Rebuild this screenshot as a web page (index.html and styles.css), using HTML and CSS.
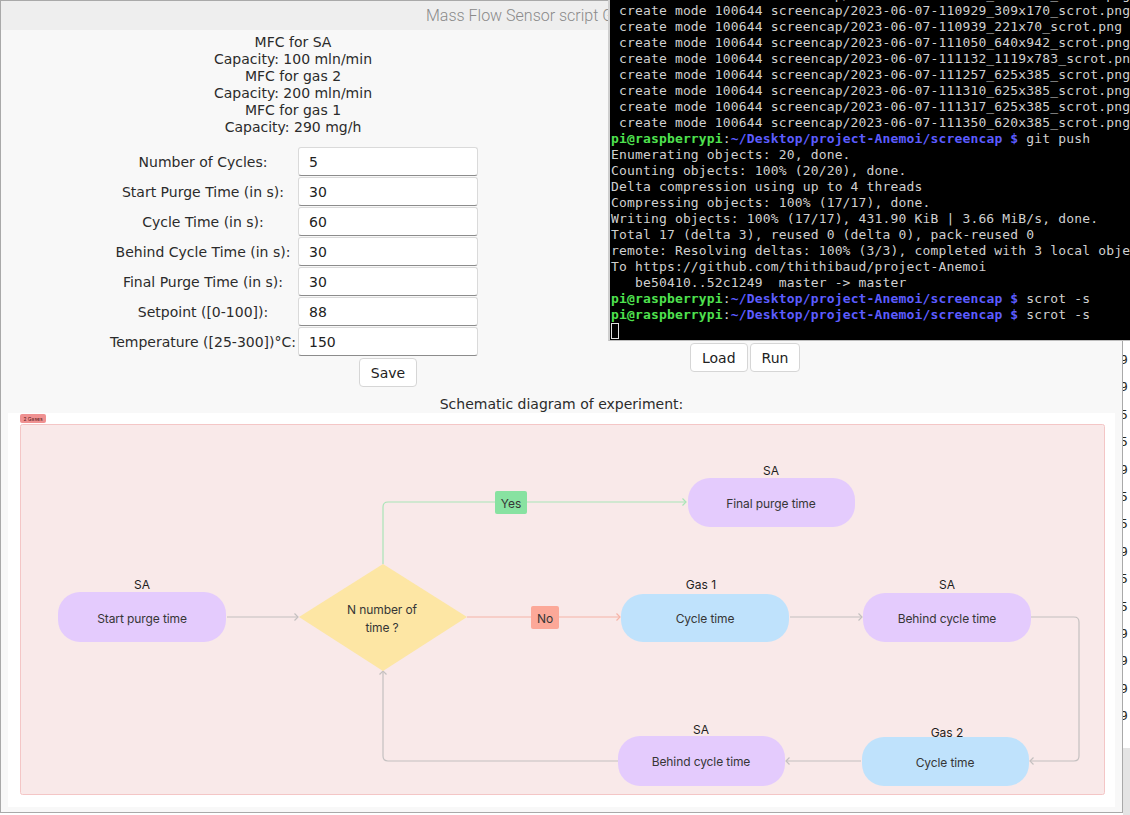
FILE: index.html
```html
<!DOCTYPE html>
<html>
<head>
<meta charset="utf-8">
<link rel="stylesheet" href="styles.css">
</head>
<body>
<div class="behind">
  <div>9</div><div>9</div><div>5</div><div>5</div><div>9</div><div>5</div><div>5</div><div>9</div><div>5</div><div>5</div><div>9</div><div>9</div><div>9</div><div>9</div>
</div>
<div class="behind-gray"></div>

<div class="app">
  <div class="titlebar"><span class="title">Mass Flow Sensor script GUI</span></div>
  <div class="top">
    <div class="left">
      <div class="mfc">MFC for SA<br>Capacity: 100 mln/min<br>MFC for gas 2<br>Capacity: 200 mln/min<br>MFC for gas 1<br>Capacity: 290 mg/h</div>
      <div class="form">
        <div class="label">Number of Cycles:</div><input class="entry" type="text" value="5">
        <div class="label">Start Purge Time (in s):</div><input class="entry" type="text" value="30">
        <div class="label">Cycle Time (in s):</div><input class="entry" type="text" value="60">
        <div class="label">Behind Cycle Time (in s):</div><input class="entry" type="text" value="30">
        <div class="label">Final Purge Time (in s):</div><input class="entry" type="text" value="30">
        <div class="label">Setpoint ([0-100]):</div><input class="entry" type="text" value="88">
        <div class="label">Temperature ([25-300])°C:</div><input class="entry" type="text" value="150">
        <button class="btn save">Save</button>
      </div>
    </div>
    <div class="right">
      <div class="plot"></div>
      <div class="btns"><button class="btn">Load</button><button class="btn">Run</button></div>
    </div>
  </div>
  <div class="schem-label">Schematic diagram of experiment:</div>
  <div class="shot">
    <svg class="diagram" width="1107" height="394" viewBox="0 0 1107 394" xmlns="http://www.w3.org/2000/svg">
      <g transform="translate(-8,-414)">
        <rect x="20" y="415" width="26" height="9" rx="2" fill="#ef9191"/>
        <text x="33" y="419.8" class="badge">2 Gases</text>
        <rect x="20.5" y="425.5" width="1084" height="370" rx="2" fill="#f9e9e9" stroke="#f4c6c6"/>

        <g fill="none" stroke-width="1.2">
          <path d="M227 618 H298" stroke="#c4c0c0"/>
          <polyline points="294.5,614.5 298,618 294.5,621.5" stroke="#c4c0c0"/>
          <path d="M383 565 V508 Q383 503 388 503 H686" stroke="#a9e5b7"/>
          <polyline points="682.5,499.5 686,503 682.5,506.5" stroke="#a9e5b7"/>
          <path d="M467 618 H620" stroke="#f6b4a8"/>
          <polyline points="616.5,614.5 620,618 616.5,621.5" stroke="#f6b4a8"/>
          <path d="M790 618 H862" stroke="#c4c0c0"/>
          <polyline points="858.5,614.5 862,618 858.5,621.5" stroke="#c4c0c0"/>
          <path d="M1031 618 H1074 Q1079 618 1079 623 V757 Q1079 762 1074 762 H1030" stroke="#c4c0c0"/>
          <polyline points="1033.5,758.5 1030,762 1033.5,765.5" stroke="#c4c0c0"/>
          <path d="M861 762 H786" stroke="#c4c0c0"/>
          <polyline points="789.5,758.5 786,762 789.5,765.5" stroke="#c4c0c0"/>
          <path d="M618 762 H388 Q383 762 383 757 V672" stroke="#c4c0c0"/>
          <polyline points="379.5,675.5 383,672 386.5,675.5" stroke="#c4c0c0"/>
        </g>

        <polygon points="383,565 467,618 383,672 299,618" fill="#fde6a4"/>
        <text x="382" y="610" class="node">N number of</text>
        <text x="382" y="628" class="node">time ?</text>

        <rect x="495" y="492" width="32" height="23" rx="2" fill="#88e2a1"/>
        <text x="511" y="504" class="node">Yes</text>
        <rect x="531" y="607" width="28" height="23" rx="2" fill="#fca898"/>
        <text x="545" y="619" class="node">No</text>

        <text x="142" y="585" class="lbl">SA</text>
        <rect x="58" y="593" width="168" height="50" rx="22" fill="#e4cbfd"/>
        <text x="142" y="619" class="node">Start purge time</text>

        <text x="771" y="471" class="lbl">SA</text>
        <rect x="688" y="479" width="167" height="49" rx="22" fill="#e4cbfd"/>
        <text x="771" y="504" class="node">Final purge time</text>

        <text x="701" y="585" class="lbl">Gas 1</text>
        <rect x="621" y="595" width="168" height="48" rx="22" fill="#bfe2fc"/>
        <text x="705" y="619" class="node">Cycle time</text>

        <text x="947" y="585" class="lbl">SA</text>
        <rect x="863" y="594" width="168" height="49" rx="22" fill="#e4cbfd"/>
        <text x="947" y="619" class="node">Behind cycle time</text>

        <text x="947" y="733" class="lbl">Gas 2</text>
        <rect x="862" y="738" width="167" height="49" rx="22" fill="#bfe2fc"/>
        <text x="945" y="763" class="node">Cycle time</text>

        <text x="701" y="730" class="lbl">SA</text>
        <rect x="618" y="737" width="167" height="50" rx="22" fill="#e4cbfd"/>
        <text x="701" y="762" class="node">Behind cycle time</text>
      </g>
    </svg>
  </div>
</div>

<div class="terminal">
  <div class="term-lines">
    <div class="tl"> create mode 100644 screencap/2023-06-07-110858_625x385_scrot.png</div>
    <div class="tl"> create mode 100644 screencap/2023-06-07-110929_309x170_scrot.png</div>
    <div class="tl"> create mode 100644 screencap/2023-06-07-110939_221x70_scrot.png</div>
    <div class="tl"> create mode 100644 screencap/2023-06-07-111050_640x942_scrot.png</div>
    <div class="tl"> create mode 100644 screencap/2023-06-07-111132_1119x783_scrot.png</div>
    <div class="tl"> create mode 100644 screencap/2023-06-07-111257_625x385_scrot.png</div>
    <div class="tl"> create mode 100644 screencap/2023-06-07-111310_625x385_scrot.png</div>
    <div class="tl"> create mode 100644 screencap/2023-06-07-111317_625x385_scrot.png</div>
    <div class="tl"> create mode 100644 screencap/2023-06-07-111350_620x385_scrot.png</div>
    <div class="tl"><span class="pu">pi@raspberrypi</span>:<span class="pp">~/Desktop/project-Anemoi/screencap $</span> git push</div>
    <div class="tl">Enumerating objects: 20, done.</div>
    <div class="tl">Counting objects: 100% (20/20), done.</div>
    <div class="tl">Delta compression using up to 4 threads</div>
    <div class="tl">Compressing objects: 100% (17/17), done.</div>
    <div class="tl">Writing objects: 100% (17/17), 431.90 KiB | 3.66 MiB/s, done.</div>
    <div class="tl">Total 17 (delta 3), reused 0 (delta 0), pack-reused 0</div>
    <div class="tl">remote: Resolving deltas: 100% (3/3), completed with 3 local objects.</div>
    <div class="tl">To https://github.com/thithibaud/project-Anemoi</div>
    <div class="tl">   be50410..52c1249  master -&gt; master</div>
    <div class="tl"><span class="pu">pi@raspberrypi</span>:<span class="pp">~/Desktop/project-Anemoi/screencap $</span> scrot -s</div>
    <div class="tl"><span class="pu">pi@raspberrypi</span>:<span class="pp">~/Desktop/project-Anemoi/screencap $</span> scrot -s</div>
    <div class="tl"><span class="cursor"></span></div>
  </div>
</div>
</body>
</html>
```

FILE: styles.css
```css
body {
  margin: 0;
  width: 1130px;
  height: 815px;
  overflow: hidden;
  background: #ffffff;
  position: relative;
  font-family: "DejaVu Sans", sans-serif;
}

/* desktop content behind the windows */
.behind {
  position: absolute;
  left: 1120px;
  top: 346px;
  font-family: "DejaVu Sans Mono", monospace;
  font-size: 13px;
  line-height: 27.4px;
  color: #2a2a1a;
}
.behind-gray {
  position: absolute;
  left: 1123px;
  top: 748px;
  width: 7px;
  height: 67px;
  background: #e4e4e4;
}

/* application window */
.app {
  position: absolute;
  left: 0;
  top: 0;
  width: 1123px;
  height: 813px;
  box-sizing: border-box;
  border: 1px solid #a9a9a9;
  background: #f8f8f8;
  display: flex;
  flex-direction: column;
  z-index: 1;
}
.titlebar {
  height: 29px;
  flex-shrink: 0;
  background: #eeeeee;
  display: flex;
  align-items: center;
  padding-left: 425px;
  font-family: Roboto, "Noto Sans", sans-serif;
  font-weight: 300;
  font-size: 16px;
  color: #8a8a8a;
  white-space: nowrap;
}

.top {
  display: flex;
  padding-top: 4px;
}
.left {
  width: 584px;
  display: flex;
  flex-direction: column;
  align-items: center;
}
.mfc {
  font-size: 14px;
  line-height: 17px;
  text-align: center;
  color: #2b2b2b;
}
.form {
  margin-top: 11px;
  display: grid;
  grid-template-columns: 190px 180px;
  grid-auto-rows: 29px;
  row-gap: 1px;
}
.label {
  display: flex;
  align-items: center;
  justify-content: center;
  font-size: 14px;
  color: #2b2b2b;
  white-space: nowrap;
}
.entry {
  box-sizing: border-box;
  width: 180px;
  height: 29px;
  margin: 0;
  border: 1px solid #dadada;
  border-bottom-color: #8c8c8c;
  border-radius: 3px;
  background: #ffffff;
  padding: 0 10px;
  font-family: "DejaVu Sans", sans-serif;
  font-size: 14px;
  color: #222222;
  outline: none;
}
.btn {
  box-sizing: border-box;
  height: 29px;
  margin: 0;
  padding: 0 11px;
  background: #ffffff;
  border: 1px solid #d6d6d6;
  border-radius: 4px;
  font-family: "DejaVu Sans", sans-serif;
  font-size: 14px;
  color: #222222;
}
.save {
  grid-column: 2;
  justify-self: center;
  margin-top: 1px;
}
.right {
  padding-left: 105px;
}
.plot {
  height: 309px;
}
.btns {
  display: flex;
  gap: 2px;
}

.schem-label {
  margin-top: 10px;
  font-size: 14px;
  line-height: 17px;
  text-align: center;
  color: #2b2b2b;
}
.shot {
  margin: 0 7px;
  height: 394px;
  background: #ffffff;
}
.diagram {
  display: block;
}
.diagram text {
  font-family: Inter, "Noto Sans", sans-serif;
  text-anchor: middle;
  dominant-baseline: central;
}
.diagram .node {
  font-size: 12px;
  fill: #363636;
  letter-spacing: -0.1px;
}
.diagram .lbl {
  font-size: 12px;
  fill: #1e1e1e;
}
.diagram .badge {
  font-size: 5px;
  fill: #5a2020;
}

/* terminal window */
.terminal {
  position: absolute;
  left: 608px;
  top: 0;
  width: 530px;
  height: 341px;
  box-sizing: border-box;
  background: #000000;
  border-left: 2px solid #cfcfcf;
  border-bottom: 1px solid #bdbdbd;
  padding-left: 1px;
  overflow: hidden;
  font-family: "DejaVu Sans Mono", monospace;
  font-size: 13px;
  line-height: 16px;
  letter-spacing: 0.16px;
  color: #d0d0d0;
  z-index: 2;
}
.term-lines {
  margin-top: -13px;
}
.tl {
  height: 16px;
  white-space: pre;
}
.pu {
  color: #4fe24f;
  font-weight: bold;
}
.pp {
  color: #5c5cff;
  font-weight: bold;
}
.cursor {
  display: inline-block;
  box-sizing: border-box;
  width: 8px;
  height: 16px;
  border: 1px solid #e0e0e0;
  vertical-align: top;
}
```
